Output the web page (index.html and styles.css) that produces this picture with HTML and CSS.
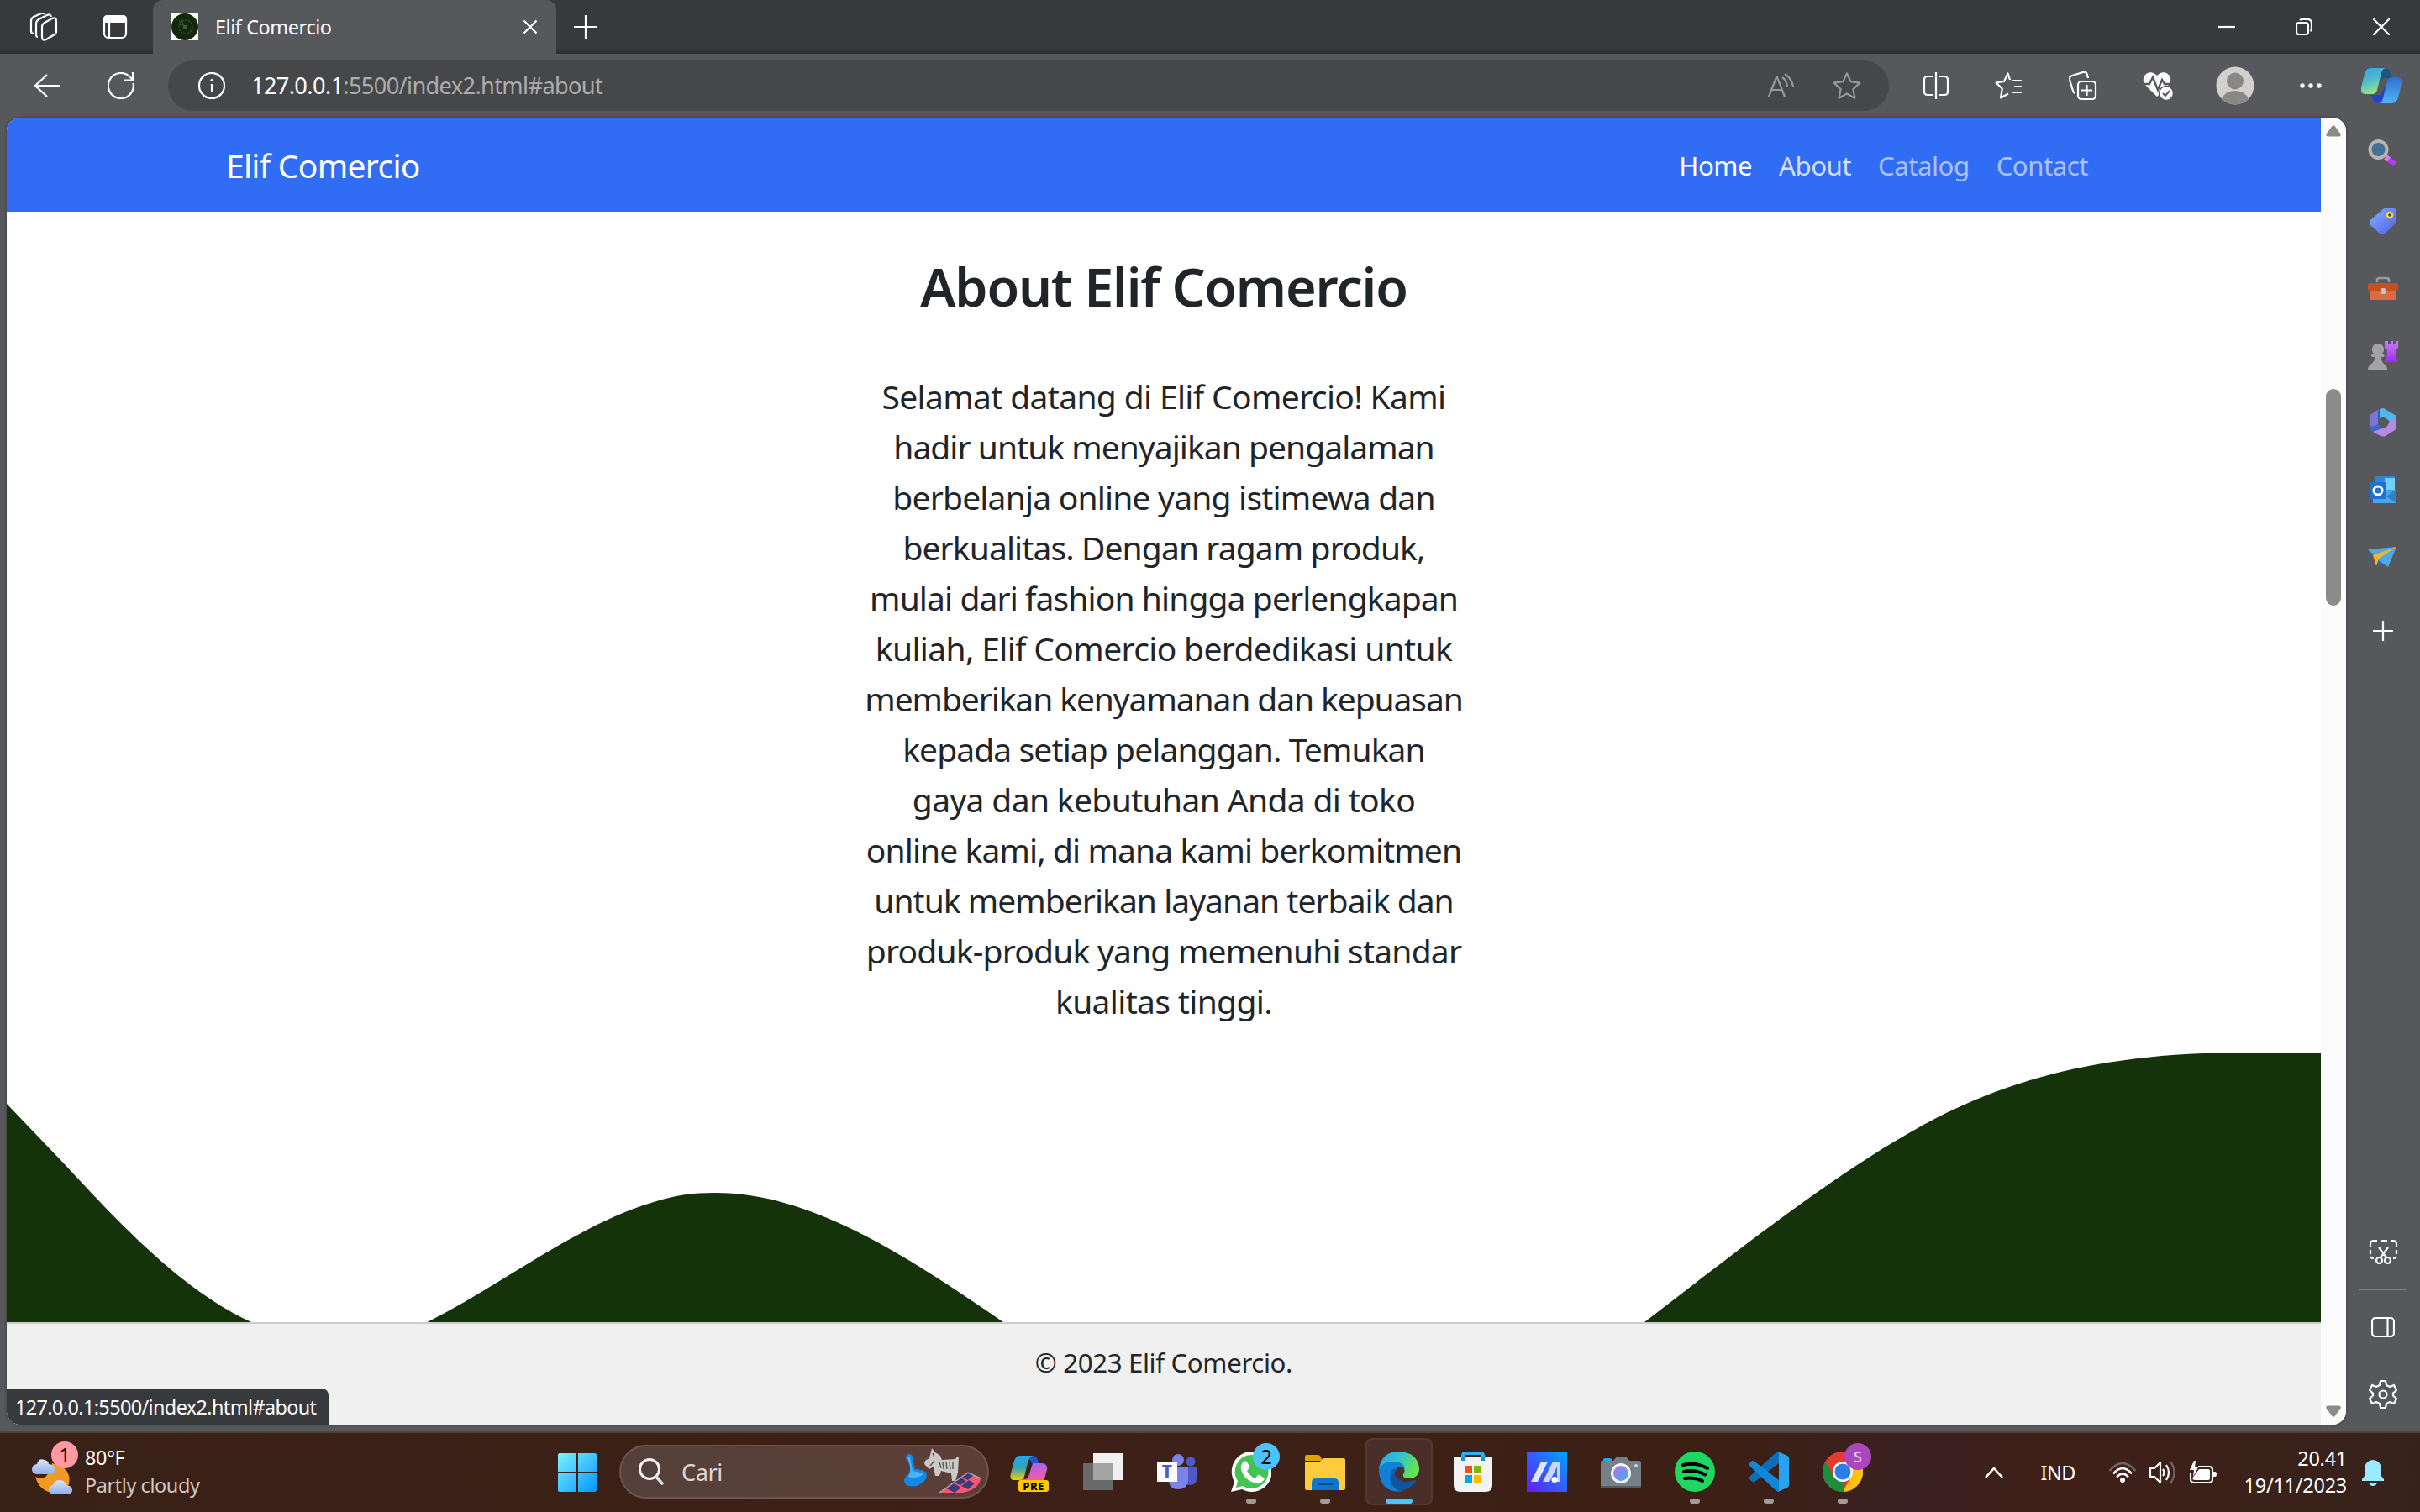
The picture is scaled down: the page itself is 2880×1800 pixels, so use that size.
FILE: index.html
```html
<!DOCTYPE html>
<html lang="id">
<head>
<meta charset="utf-8">
<title>Elif Comercio</title>
<link rel="stylesheet" href="styles.css">
</head>
<body>
<div class="desktop">
  <header class="tabbar">
    <div class="tab-tools">
      <svg class="i" width="34" height="34" viewBox="0 0 34 34"><path d="M18 12 27 7q5-2 5 3v12q0 3-2 4l-10 6q-5 2-5-3V17q0-3 3-5zM10 29q-2 0-2-3V13q0-3 3-5l10-5q4-2 5 2M5 25q-3 0-3-3V10q0-3 3-5l9-4q3-1 4 1"/></svg>
      <svg class="i" width="30" height="30" viewBox="0 0 30 30"><rect x="2" y="2" width="26" height="26" rx="5"/><path d="M8 9v18"/><path class="f" d="M2 9V6q0-4 4-4h18q4 0 4 4v3z"/></svg>
    </div>
    <div class="tab">
      <svg width="32" height="32" viewBox="0 0 32 32"><path fill="#fff" d="M0 0h32v32H0z"/><circle cx="16" cy="16" r="16" fill="#14290c"/><circle cx="17" cy="16" r="8" fill="none" stroke="#38522f" stroke-width="1.200" stroke-dasharray="3 1"/><path d="M9 8l3 6M13 7l1 7M9 13l6 1" stroke="#38522f"/><path d="M14 15h5M14 17h5" stroke="#7c8c76" stroke-width="1.200"/></svg>
      <span class="t24 tab-title">Elif Comercio</span>
      <svg class="i close" width="18" height="18" viewBox="0 0 18 18"><path d="m1.500 1.500 15 15m0-15-15 15"/></svg>
    </div>
    <svg class="i newtab" width="28" height="28" viewBox="0 0 28 28"><path d="M14 0v28M0 14h28"/></svg>
    <div class="winbtns">
      <svg class="i" width="20" height="20" viewBox="0 0 20 20"><path d="M0 10h20"/></svg>
      <svg class="i" width="20" height="20" viewBox="0 0 20 20"><rect x="1" y="5" width="14" height="14" rx="3"/><path d="M5 2q1-1 3-1h6q5 0 5 5v6q0 2-1.500 3"/></svg>
      <svg class="i" width="20" height="20" viewBox="0 0 20 20"><path d="m0 0 20 20M20 0 0 20"/></svg>
    </div>
  </header>
  <div class="toolbar">
    <svg class="i back" width="32" height="28" viewBox="0 0 32 28"><path d="M16 1 2 14l14 13M2 14h30"/></svg>
    <svg class="i reload" width="32" height="32" viewBox="0 0 32 32"><path d="M30.500 13A15 15 0 1 1 26 5l4 4M30 0v9.500h-10"/></svg>
    <div class="address">
      <svg class="i" width="32" height="32" viewBox="0 0 32 32"><circle cx="16" cy="16" r="15"/><path d="M16 14v10"/><circle class="f" cx="16" cy="9.500" r="1.600" stroke="none"/></svg>
      <span class="url t28"><b>127.0.0.1</b>:5500/index2.html#about</span>
      <svg class="i dim" width="32" height="30" viewBox="0 0 32 30"><path d="m1 28 9-23h1l9 23M4 20h13M17 5q5 3 6 11M20 1q8 5 10 15"/></svg>
      <svg class="i dim star" width="34" height="32" viewBox="0 0 34 32"><path d="m17 1.500 4.600 9.700 10.800 1.400-8 7.500 2 10.600L17 25.500l-9.400 5.200 2-10.600-8-7.500 10.800-1.400z" stroke-linejoin="round"/></svg>
    </div>
    <div class="actions">
      <svg class="i" width="32" height="32" viewBox="0 0 32 32"><path d="M12 5H6Q2 5 2 9v14q0 4 4 4h6M20 5h6q4 0 4 4v14q0 4-4 4h-6M16 0v32"/></svg>
      <svg class="i" width="34" height="32" viewBox="0 0 34 32"><path d="M20 10h12M23 17h9M20 24h12M18 9 15.500 1.500 11 11 1.500 12.500l7.300 7L7 30.500l9-5" stroke-linejoin="round"/></svg>
      <svg class="i" width="34" height="34" viewBox="0 0 34 34"><rect x="11" y="12" width="21" height="21" rx="4"/><path d="M21.500 16v13M15 22.500h13M8 26q-2 0-3-3L1 10q-1-4 3-5l13-4q4-1 5 3l1 4"/></svg>
      <svg width="36" height="34" viewBox="0 0 36 34"><path fill="#fff" d="M17 5C12-1 3 0 1 8q-1 6 3 9l13 13 13-13q4-4 3-9C31 0 22-1 17 5z"/><path fill="none" stroke="#57585b" stroke-width="2.400" d="M0 15h8l4-8 6 15 5-12 3 5h10"/><circle cx="28" cy="26" r="8.500" fill="#fff" stroke="#57585b" stroke-width="1.500"/><path d="m24 26 3 3 5-6" fill="none" stroke="#57585b" stroke-width="2"/></svg>
      <svg class="avatar" width="46" height="46" viewBox="0 0 46 46"><circle cx="23" cy="23" r="22.500" fill="#d2d0ce"/><circle cx="23" cy="17.500" r="10" fill="#8a8886"/><path fill="#8a8886" d="M7 39q4-10 16-10t16 10Q23 52 7 39z"/></svg>
      <svg class="f" width="26" height="6" viewBox="0 0 26 6"><circle cx="3" cy="3" r="2.700"/><circle cx="13" cy="3" r="2.700"/><circle cx="23" cy="3" r="2.700"/></svg>
      <svg class="copilot" width="50" height="44" viewBox="0 0 50 44"><defs><linearGradient id="a" x2=".3" y2="1"><stop stop-color="#39a5dc"/><stop offset=".5" stop-color="#4db8cf"/><stop offset="1" stop-color="#8ee58a"/></linearGradient><linearGradient id="b" x2="0" y2="1"><stop stop-color="#2f6fd2"/><stop offset="1" stop-color="#4fb4f6"/></linearGradient></defs><path d="M12 1h17q5 0 7 6l2 6h-9q-5 0-7 6z" fill="#1c567f"/><path d="M12 33h12l5-9 4 13q-1 6-6 6h-4q-6 0-8-5z" fill="#2443c8"/><path d="M12 1h18q-4 1-5 6l-5 20q-1 5-6 5H6q-6 0-5-8l4-16q2-7 7-7z" fill="url(#a)"/><path d="M39 12h4q7 0 6 8l-4 16q-2 7-8 7H22q4-1 5-6l5-20q1-5 7-5z" fill="url(#b)"/></svg>
    </div>
  </div>

  <div class="middle">
    <div class="viewport">
      <main class="page">
        <nav class="nav">
          <span class="brand">Elif Comercio</span>
          <ul class="links"><li class="on">Home</li><li class="hov">About</li><li>Catalog</li><li>Contact</li></ul>
        </nav>
        <section class="about">
          <h2>About Elif Comercio</h2>
          <p>
            <span>Selamat datang di Elif Comercio! Kami</span>
            <span class="tight">hadir untuk menyajikan pengalaman</span>
            <span class="snug">berbelanja online yang istimewa dan</span>
            <span class="close-set">berkualitas. Dengan ragam produk,</span>
            <span class="close-set">mulai dari fashion hingga perlengkapan</span>
            <span>kuliah, Elif Comercio berdedikasi untuk</span>
            <span class="tightest">memberikan kenyamanan dan kepuasan</span>
            <span class="close-set">kepada setiap pelanggan. Temukan</span>
            <span>gaya dan kebutuhan Anda di toko</span>
            <span class="close-set">online kami, di mana kami berkomitmen</span>
            <span class="tight">untuk memberikan layanan terbaik dan</span>
            <span class="snug">produk-produk yang memenuhi standar</span>
            <span>kualitas tinggi.</span>
          </p>
        </section>
        <svg class="wave" width="2754" height="321" viewBox="0 0 2754 321"><path fill="#14330a" d="M0 61 66 130C132 201 208 283 291 321H0zM500.500 321C590 276 680 204 770 178C795 170 815 167 843 167C960 167 1075 245 1186 321zM1949 321C2060 236 2180 140 2285 84C2400 22 2520 0 2666 0H2754V321z"/></svg>
        <footer class="foot">© 2023 Elif Comercio.</footer>
      </main>
      <div class="scroll">
        <svg width="18" height="14" viewBox="0 0 18 14"><path fill="#8b8b8b" d="M7 1.500q2-2.500 4 0l6.500 9q1 3-2 3h-13q-3 0-2-3z"/></svg>
        <div class="thumb"></div>
        <svg class="down" width="18" height="14" viewBox="0 0 18 14"><path fill="#8b8b8b" d="M7 12.500q2 2.500 4 0l6.500-9q1-3-2-3h-13q-3 0-2 3z"/></svg>
      </div>
      <div class="status t24">127.0.0.1:5500/index2.html#about</div>
    </div>
    <aside class="side">
      <svg width="36" height="36" viewBox="0 0 36 36"><path d="m22 22 10 9" stroke="#b43cf0" stroke-width="6"/><path d="m21 22 4 3" stroke="#e879f5" stroke-width="6"/><circle cx="12.500" cy="13" r="10" fill="#46708f" stroke="#b4b4b4" stroke-width="4"/></svg>
      <svg width="36" height="36" viewBox="0 0 36 36"><defs><linearGradient id="c" x2="1" y2="1"><stop stop-color="#7db4fb"/><stop offset="1" stop-color="#5559ee"/></linearGradient></defs><path fill="url(#c)" d="m3 17 15-13q1-1 3-1h10q3 0 3 3v12q0 2-1 3L20 33q-3 2-6 0L3 23q-2-3 0-6z"/><circle cx="26" cy="11" r="3" fill="#444" stroke="#ffd43b" stroke-width="2.400"/></svg>
      <svg width="36" height="36" viewBox="0 0 36 36"><path d="M11 11V8q0-2 3-2h8q3 0 3 2v3" fill="none" stroke="#999c9c" stroke-width="2.600"/><path fill="#dc6a41" d="M2 18h32v12q0 2-2 2H4q-2 0-2-2z"/><path fill="#c4501f" d="M2 12h32q2 0 2 2v5q0 2-2 2H2q-2 0-2-2v-5q0-2 2-2z"/><rect x="15" y="18" width="6" height="7" rx="1.500" fill="#c0c4c6"/></svg>
      <svg width="36" height="38" viewBox="0 0 36 38"><defs><linearGradient id="m" x2="0" y2="1"><stop stop-color="#cf7af5"/><stop offset="1" stop-color="#9d2bf5"/></linearGradient></defs><path fill="url(#m)" d="M20 2h4v4h3V2h3v4h3V2h3v8l-3 3 1 10q2 1 2 4H20q0-3 2-4l1-10-3-3z"/><path fill="#a3a3a3" d="M12 5a7 7 0 0 1 5 12q4 1 2 4h-3q0 6 4 9 3 2 3 6H0q0-4 3-6 5-3 5-9H5q-3-3 2-4a7 7 0 0 1 5-12z"/></svg>
      <svg width="36" height="36" viewBox="0 0 36 36"><path fill="#51b8ee" d="M13 3q5-4 9 0l10 6q2 1 2 3v10L21 13q-4-3-9 3z"/><path fill="#8074d2" d="M13 2v16q0 5 2 7l-9 4-3-3q-1-1-1-3V11q0-2 2-3z"/><path fill="#4363cd" d="M13 18q0 5 4 7L8 30q-6-3-6-8 6 2 11-4z"/><path fill="#b58ae4" d="M34 13v11q0 2-2 3l-11 7q-3 1-6 0L6 29l14-5q5-2 5-7z"/><path fill="#2b5fb4" d="M12 3.500 14 2v12l-2 3z"/><ellipse cx="18" cy="18" rx="6" ry="6" fill="#57585b"/></svg>
      <svg width="36" height="36" viewBox="0 0 36 36"><path fill="#2f86d6" d="M8 2h24v20H8z"/><path fill="#71d0f8" d="M20 4h12v14H20z"/><path fill="#46a8e8" d="M6 18h28v16H6z"/><path fill="#2560a8" d="m34 17-12 9 12 8z" opacity=".55"/><rect x="2" y="9" width="20" height="20" rx="2" fill="#2371cf"/><circle cx="12" cy="19" r="5" fill="none" stroke="#fff" stroke-width="3"/></svg>
      <svg width="36" height="36" viewBox="0 0 36 36"><path fill="#2d63c2" d="m11 20 3 8 5-6z"/><path fill="#4aaae8" d="m0 9 34-3-10 24-13-9-5-6z"/><path fill="#f0b52f" d="M34 6 6 16l4 13 3-9z"/></svg>
      <svg class="i plus" width="24" height="24" viewBox="0 0 24 24"><path d="M12 0v24M0 12h24"/></svg>
      <svg class="i snip" width="36" height="32" viewBox="0 0 36 32"><path d="M3 10V7q0-4 4-4h4M15 3h8M27 3h3q4 0 4 4v3M34 14v5M3 14v5M3 22q1 2 4 2M34 22q-1 2-4 2M13 11l9 12M24 11l-9 12"/><circle cx="13.500" cy="26.500" r="3.500"/><circle cx="23.500" cy="26.500" r="3.500"/></svg>
      <hr>
      <svg class="i panel" width="28" height="24" viewBox="0 0 28 24"><rect x="1" y="1" width="26" height="22" rx="4"/><path d="M19.500 1v22"/></svg>
      <svg class="i gear" width="34" height="36" viewBox="0 0 34 36"><path stroke-linejoin="round" d="m14 2h6l1 5 4 2 5-2 3 6-4 3.500v3L33 23l-3 6-5-2-4 2-1 5h-6l-1-5-4-2-5 2-3-6 4-3.500v-3L1 13l3-6 5 2 4-2z"/><circle cx="17" cy="18" r="4.500"/></svg>
    </aside>
  </div>

  <footer class="taskbar">
    <div class="weather">
      <div class="wicon">
        <svg width="56" height="56" viewBox="0 0 56 56"><defs><linearGradient id="d" x2="0" y2="1"><stop stop-color="#dbe6fa"/><stop offset="1" stop-color="#8fadec"/></linearGradient></defs><path fill="#f29a20" d="M6 33q14 8 20-16Q50 22 46 42q-7 12-20 10Q11 50 6 33z"/><path fill="url(#d)" d="M7 30q-5-1-5-6 0-5 6-6 2-8 9-5 5 1 5 5 8 1 8 7 0 5-5 5z"/><path fill="url(#d)" d="M27 54q-5-1-5-6 0-4 5-5 2-7 9-6 6 1 7 6 7 1 7 6 0 4-4 5z"/></svg>
        <span class="badge pink">1</span>
      </div>
      <div class="wtext t24"><div>80°F</div><div class="soft">Partly cloudy</div></div>
    </div>
    <svg class="start" width="46" height="46" viewBox="0 0 46 46"><defs><linearGradient id="e" x2="1" y2="1"><stop stop-color="#7df3ff"/><stop offset=".5" stop-color="#42c3ff"/><stop offset="1" stop-color="#0a93ff"/></linearGradient></defs><path fill="url(#e)" d="M2 0h20v22H0V2q0-2 2-2zM24 0h20q2 0 2 2v20H24zM0 24h22v22H2q-2 0-2-2zM24 24h22v20q0 2-2 2H24z"/></svg>
    <div class="search t28">
      <svg width="30" height="32" viewBox="0 0 30 32"><circle cx="13" cy="13" r="11.500" fill="none" stroke="#f3f0ef" stroke-width="3"/><path d="m21 22 7 8" stroke="#dfe3ea" stroke-width="3.500" stroke-linecap="round"/></svg>
      <span>Cari</span>
      <svg class="toys" width="96" height="52" viewBox="0 0 96 52"><path fill="#1189e6" d="M3 9q1-5 5-4 4 1 3 6l3 12q14 1 14 7 0 8-12 13Q2 45 1 37q0-4 6-9 2-8-1-14-3-2-3-5z"/><path fill="#48b6fb" d="M5 9q2-2 3 0l3 16q8 1 13 4-8 6-18 3 5-7 0-20z"/><path fill="#c9cac5" d="m34-2 4 5 6 4 2 5 16-1 2-3 2 1-1 18-3 10h-4l-1-9-12-3-2 6h-5l-2-11-5 3-6-6 1-4 5-3z"/><path stroke="#55584f" stroke-width="1.400" d="m35 4 2 5M43 14l2 8M47 15l1 8M51 15l1 8M55 15l1 8M59 14v9M31 8l-5 4M37 13l-5 6"/><path fill="#ff566f" d="m43 51 34-24 15 7q-2 13-21 17z"/><path fill="#3c3c74" d="m51 46 9-6 9 5-8 6zM69 32l8-5 7 3-7 6zM69 43l9-7 7 4-8 7zM60 39l8-6 7 4-7 5z"/><path d="m43 51 34-24 15 7" fill="none" stroke="#aaa5c2" stroke-width="1.500"/></svg>
    </div>
    <div class="apps">
      <div class="app"><svg width="48" height="48" viewBox="0 0 48 48"><defs><linearGradient id="g" x2="0" y2="1"><stop stop-color="#1ea7f0"/><stop offset=".5" stop-color="#35a3b5"/><stop offset="1" stop-color="#f5d000"/></linearGradient><linearGradient id="h" x2="0" y2="1"><stop stop-color="#a861f5"/><stop offset="1" stop-color="#ff5c8d"/></linearGradient></defs><path fill="#1f56d0" d="M22 5h7q5 1 6 9h-8z"/><path fill="url(#g)" d="M12 5h16q-4 1-6 9l-4 16q-1 4-4 4H5q-5-1-3-8l4-15q2-6 6-6z"/><path fill="url(#h)" d="M28 14h11q7 0 6 8l-4 14H12q-1-3 4-3h3q4-1 5-6z"/><rect x="11" y="34" width="36" height="14" rx="3" fill="#ffc800"/><text x="29" y="45.500" text-anchor="middle" class="pre">PRE</text></svg></div>
      <div class="app"><svg width="48" height="48" viewBox="0 0 48 48"><path fill="#f1f1f1" d="M12 2h36v32H12z"/><path fill="#6a6a6a" d="M0 14h12v20h24v12H0z"/><path fill="#a4a4a4" d="M12 14h24v20H12z"/></svg></div>
      <div class="app"><svg width="48" height="48" viewBox="0 0 48 48"><circle cx="40" cy="12" r="5.500" fill="#5059c9"/><path fill="#5059c9" d="M32 19h15v13q0 8-8 8-7 0-7-8z"/><circle cx="25" cy="10" r="7" fill="#7b83eb"/><path fill="#7b83eb" d="M14 19h23v14q0 12-12 12-11 0-11-12z"/><path fill="#fff" d="M0 12h24v24H0z"/><text x="12" y="31" text-anchor="middle" class="tee">T</text></svg></div>
      <div class="app run"><svg width="48" height="48" viewBox="0 0 48 48"><path fill="#fff" d="M24 0a24 24 0 1 1-11 45L0 48l4-12A24 24 0 0 1 24 0z"/><path fill="#43c351" d="M24 4a20 20 0 1 1-10 37l-8 2 2-8A20 20 0 0 1 24 4z"/><path fill="#fff" d="M15 12q3-2 5 2l2 4q0 2-3 5 4 7 10 9l3-4q2-1 5 2 4 2 2 4-4 5-9 4-15-4-18-17-1-5 3-9z"/></svg><span class="badge blue">2</span></div>
      <div class="app run"><svg width="48" height="48" viewBox="0 0 48 48"><path fill="#e3a000" d="M0 6q0-2 2-2h13q3 0 4 3l2 4H0z"/><path fill="#ffcb3a" d="M0 12h18q3-4 5-4h23q2 0 2 2v34q0 2-2 2H2q-2 0-2-2z"/><path fill="#0f76d0" d="M8 46V37q0-5 5-5h22q5 0 5 5v9z"/><path d="M15 39h18" stroke="#0b4a8e" stroke-width="2"/></svg></div>
      <div class="app active"><svg width="48" height="48" viewBox="0 0 48 48"><defs><linearGradient id="j" x2="1" y2=".4"><stop stop-color="#2f9fe8"/><stop offset=".5" stop-color="#2ec3d2"/><stop offset="1" stop-color="#66e34f"/></linearGradient></defs><path fill="url(#j)" d="M0 21Q3 0 24 0q22 1 24 20 0 11-11 12-10 0-8-5 3-3 0-9Q16 5 0 21z"/><path fill="#1080d8" d="M0 22Q4 12 16 12q14 0 15 9-6-6-11 1-6 11 5 22 3 3 4 3Q3 51 0 24z"/><path fill="#1053a0" d="M16 22q-8 16 8 25 13-1 20-12 1-2-2-1-14 6-22-5-3-6 1-10z"/></svg></div>
      <div class="app"><svg width="48" height="48" viewBox="0 0 48 48"><path d="M12 11V5q0-3 3-3h18q3 0 3 3v6" fill="none" stroke="#29b2ee" stroke-width="4"/><path fill="#f3f3f3" d="M1 7h46v33q0 8-8 8H9q-8 0-8-8z"/><path d="M12 11V7M36 11V7" stroke="#1793dc" stroke-width="4"/><path fill="#f25022" d="M14 17h9v9h-9z"/><path fill="#7fba00" d="M25 17h9v9h-9z"/><path fill="#00a4ef" d="M14 28h9v9h-9z"/><path fill="#ffb900" d="M25 28h9v9h-9z"/></svg></div>
      <div class="app"><svg width="48" height="48" viewBox="0 0 48 48"><defs><linearGradient id="k" x1="0" y1="1" x2="1" y2="0"><stop stop-color="#6419ff"/><stop offset="1" stop-color="#00a5ff"/></linearGradient></defs><path fill="url(#k)" d="M0 0h48v48H0z"/><path fill="#dfe4ff" d="m5 36 12-24h8L13 36z"/><path fill="#cdd6ff" d="m19 36 12-24h8v24h-3V18l-9 18z"/><circle cx="33" cy="33.500" r="3.500" fill="#fff"/></svg></div>
      <div class="app"><svg width="48" height="48" viewBox="0 0 48 48"><rect x="3" y="8" width="10" height="6" rx="2" fill="#2aa5e6"/><path fill="#778087" d="M2 11h13l4-5h11l4 5h12q2 0 2 2v30H0V13q0-2 2-2z"/><path fill="#545b61" d="M0 41h48v2H0z"/><defs><linearGradient id="l" x2="1" y2="1"><stop stop-color="#c56be0"/><stop offset="1" stop-color="#2bb6f3"/></linearGradient></defs><circle cx="24" cy="26" r="10.500" fill="url(#l)" stroke="#f1f1f1" stroke-width="3"/><circle cx="42" cy="17" r="2" fill="#c9dbe3"/></svg></div>
      <div class="app run"><svg width="48" height="48" viewBox="0 0 48 48"><circle cx="24" cy="24" r="24" fill="#1ed760"/><path d="M10 16q15-4 29 4M11 24q13-3 25 3.500M12 32q11-2 21 3" fill="none" stroke="#000" stroke-width="4" stroke-linecap="round"/></svg></div>
      <div class="app run"><svg width="48" height="48" viewBox="0 0 48 48"><path fill="#0a6fb7" d="M36 0v14L6 37l-5-4q-2-2 0-3L33 1z"/><path fill="#1087d6" d="m6 11 30 23v14l-3-1L1 17q-2-1 0-3l3-3z"/><path fill="#26a4f2" d="m35 0 11 5q2 1 2 3v32q0 2-2 3l-11 5q1 0 1-3V3q0-3-1-3z"/></svg></div>
      <div class="app run"><svg width="48" height="48" viewBox="0 0 48 48"><circle cx="24" cy="24" r="24" fill="#e33b2e"/><path fill="#fbc116" d="M24 13h21.500A24 24 0 0 1 24 48l10-18z"/><path fill="#1e8e3e" d="M3.500 12 14 30l10 5 2 13A24 24 0 0 1 3.500 12z"/><circle cx="24" cy="24" r="12" fill="#fff"/><circle cx="24" cy="24" r="9.500" fill="#2b7de9"/></svg><span class="badge purple">S</span></div>
    </div>
    <div class="tray t24">
      <svg class="i chev" width="22" height="14" viewBox="0 0 22 14"><path stroke-width="2.600" d="m1 13 10-11 10 11"/></svg>
      <span class="lang">IND</span>
      <svg class="wifi" width="34" height="26" viewBox="0 0 34 26"><g fill="none" stroke="#fff" stroke-width="2.400"><path opacity=".3" d="M1.500 11q15.500-18 31 0"/><path d="M6 14.500q11-13 22 0M10 18.500q7-8 14 0"/></g><circle cx="17" cy="22" r="3" fill="#fff"/></svg>
      <svg class="i" width="34" height="30" viewBox="0 0 34 30"><path stroke-linejoin="round" d="M2 10v10h5l7 7V3l-7 7zM17 11q3 4 0 8M21 6q6 9 0 18"/><path opacity=".3" d="M26 2q9 13 0 26"/></svg>
      <svg width="34" height="30" viewBox="0 0 34 30"><path fill="none" stroke="#fff" stroke-width="2.200" d="M11 8h13q4 0 4 4v11q0 4-4 4H6q-4 0-4-4v-8"/><path fill="#fff" d="M12 11h11q2 0 2 2v9q0 2-2 2H7q-2 0-3-2zM29 14h2q2 0 2 3t-2 3h-2zM6 1 1 12h5L5 20l6-11H7l1-8z"/></svg>
      <div class="clock"><div>20.41</div><div>19/11/2023</div></div>
      <svg width="26" height="32" viewBox="0 0 26 32"><path fill="#99ebff" d="M3 11a10 10 0 0 1 20 0v9l3 4v2H0v-2l3-4zM8 28h10q-1 4-5 4t-5-4z"/></svg>
    </div>
  </footer>
</div>
</body>
</html>
```
FILE: styles.css
```css
* { box-sizing: border-box; }
body { margin: 0; font-family: "Noto Sans", "Open Sans", sans-serif; }
svg { display: block; flex: none; }
.desktop { width: 2880px; height: 1800px; display: flex; flex-direction: column; overflow: hidden; background: #57585b; }
.i { fill: none; stroke: #fff; stroke-width: 2.2; }
.f { fill: #fff; }
.dim { stroke: #98999b; }
.t24 { font-size: 23.400px; letter-spacing: -0.400px; }
.t28 { font-size: 27.200px; letter-spacing: -0.500px; }

/* Tab strip */
.tabbar { height: 64px; flex: none; display: flex; align-items: center; background: linear-gradient(#38393c 58px, #2c2d2f); color: #fff; }
.tab-tools { width: 182px; display: flex; gap: 53px; padding-left: 35px; align-items: center; }
.tab { width: 480px; height: 64px; background: #57585b; border-radius: 12px 12px 0 0; display: flex; align-items: center; padding: 0 22px; }
.tab-title { margin-left: 20px; line-height: 62px; padding-bottom: 1px; }
.close { margin-left: auto; }
.newtab { margin-left: 21px; }
.winbtns { margin-left: auto; margin-right: 36px; display: flex; gap: 72px; }

/* Toolbar */
.toolbar { height: 76px; flex: none; display: flex; align-items: center; padding-left: 40px; }
.reload { margin-left: 56px; }
.address { width: 2048px; height: 60px; margin-left: 40px; border-radius: 30px; background: #464749; display: flex; align-items: center; padding: 0 33px 0 36px; }
.url { margin-left: 31px; margin-right: auto; color: #acadae; line-height: 60px; letter-spacing: -0.650px; }
.url b { font-weight: 400; color: #fff; }
.star { margin-left: 45px; }
.actions { margin-left: 40px; display: flex; gap: 54px; align-items: center; }
.avatar { margin-left: -3px; }
.copilot { margin-left: -8px; }

/* Page area */
.middle { height: 1564px; flex: none; display: flex; }
.viewport { position: relative; width: 2784px; height: 1556px; margin-left: 8px; display: flex; border-radius: 16px; overflow: hidden; background: #fff; box-shadow: 0 0 3px #333; }
.page { width: 2754px; display: flex; flex-direction: column; color: #212529; }
.nav { height: 112px; background: #316cf4; color: #fff; display: flex; align-items: center; justify-content: space-between; padding: 2px 277px 0 261px; line-height: 110px; }
.brand { font-size: 39px; letter-spacing: -0.700px; }
.links { display: flex; gap: 32px; margin: 0; padding: 0; list-style: none; font-size: 31.200px; letter-spacing: -0.500px; color: #a9c1fb; }
.links .on { color: #fff; }
.links .hov { color: #d2dffd; }
.about { height: 1001px; text-align: center; padding-top: 50px; }
h2 { margin: 0; font-size: 62.800px; font-weight: 600; line-height: 77px; letter-spacing: -1.200px; }
p { margin: 63px 0 0; font-size: 39px; line-height: 60px; letter-spacing: -0.650px; }
p span { display: block; }
.snug { letter-spacing: -0.800px; }
.close-set { letter-spacing: -0.900px; }
.tight { letter-spacing: -0.970px; }
.tightest { letter-spacing: -1.100px; }
.foot { flex: 1; background: #f0f0f0; border-top: 2px solid #ccc; text-align: center; font-size: 31.200px; line-height: 92px; letter-spacing: -0.350px; }
.scroll { width: 30px; background: #fcfcfc; display: flex; flex-direction: column; align-items: center; padding: 9px 0; }
.thumb { width: 18px; height: 258px; border-radius: 9px; background: #8b8b8b; margin-top: 300px; }
.down { margin-top: auto; }
.status { position: absolute; left: 0; bottom: 0; width: 383px; height: 43px; padding-left: 10px; line-height: 45px; background: #38393d; color: #fff; border-radius: 0 8px 0 0; letter-spacing: -0.600px; }

/* Edge sidebar */
.side { width: 88px; display: grid; grid-template-rows: repeat(7, 80px) 96px 707px 58px 32px 1fr; justify-items: center; align-items: center; padding-top: 3px; }
.side hr { width: 56px; height: 2px; border: 0; margin: 0; background: #7d7e82; }
.snip { align-self: end; }
.gear { align-self: start; margin-top: 46px; }

/* Taskbar */
.taskbar { height: 96px; display: flex; align-items: center; border-top: 2px solid #54433c; background: linear-gradient(90deg, #3a2117, #3d2017 50%, #3c2014 70%, #3a2020 79%, #3f2019 84%, #37221b); color: #fff; }
.weather { width: 664px; display: flex; align-items: center; padding-left: 36px; }
.wicon { position: relative; }
.wtext { margin-left: 9px; line-height: 33px; padding-bottom: 2px; }
.soft { color: #d0c8c5; }
.badge { position: absolute; width: 32px; height: 32px; border-radius: 50%; font-size: 23px; line-height: 32px; text-align: center; color: #000; }
.pink { left: 25px; top: -9px; background: #ff99a4; }
.search { width: 440px; height: 64px; margin: 0 0 2px 27px; border-radius: 32px; background: linear-gradient(90deg, #54403a, #5c3e37); border: 2px solid #6d544e; display: flex; align-items: center; padding: 0 4px 0 21px; color: #ddd5d2; }
.search span { margin-left: 21px; }
.toys { margin-left: auto; overflow: visible; }
.apps { display: flex; gap: 8px; margin: 0 0 2px 8px; }
.app { width: 80px; height: 80px; display: flex; align-items: center; justify-content: center; position: relative; }
.app .badge { right: 6px; top: 6px; }
.blue { background: #4cc2ff; }
.purple { background: #ab47bc; color: #f0c4f2; font-size: 18px; font-weight: 500; }
.active { background: #4a2f28; border-radius: 8px; box-shadow: inset 0 0 0 2px #53382f; }
.run::after, .active::after { content: ""; position: absolute; bottom: 2px; width: 12px; height: 6px; border-radius: 3px; background: #a69894; }
.active::after { width: 32px; background: #4cc2ff; }
.pre { font-size: 13px; font-weight: 800; letter-spacing: .5px; }
.tee { font-size: 21px; font-weight: 800; fill: #5059c9; }
.tray { margin-left: auto; display: flex; align-items: center; padding-right: 43px; }
.lang { margin: 0 39px 0 44px; }
.wifi + svg { margin: 0 14px; }
.clock { width: 138px; text-align: right; line-height: 32px; margin: 0 18px 0 16px; padding-bottom: 2px; letter-spacing: -0.200px; }
```
